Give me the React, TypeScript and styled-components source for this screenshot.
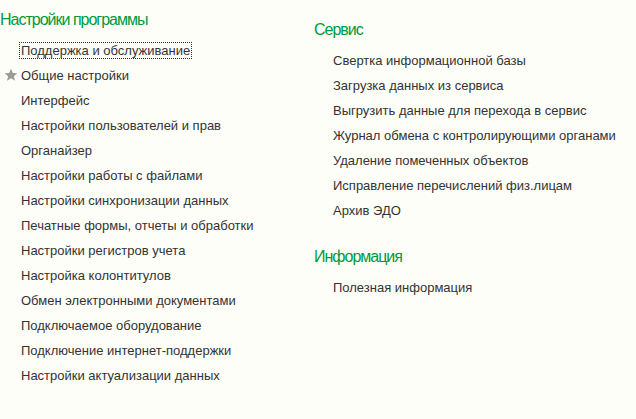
import * as React from 'react';
import styled, { createGlobalStyle } from 'styled-components';

const GlobalStyle = createGlobalStyle`
  html, body {
    margin: 0;
    padding: 0;
    background: #fefef8;
  }
  body {
    font-family: "Liberation Sans", Arial, sans-serif;
    color: #333333;
  }
`

const Page = styled.div`
  width: 636px;
  height: 419px;
  display: grid;
  grid-template-columns: 314px 1fr;
  box-sizing: border-box;
  overflow: hidden;
`

const Column = styled.div<{ $top: number }>`
  display: flex;
  flex-direction: column;
  padding-top: ${p => p.$top}px;
`

const Heading = styled.div`
  font-size: 16px;
  line-height: 20px;
  letter-spacing: -1px;
  color: #00993d;
  margin-bottom: 8px;
`

const Section = styled.div`
  display: flex;
  flex-direction: column;
  margin-bottom: 24px;
`

const Row = styled.div<{ $indent: number }>`
  display: flex;
  align-items: center;
  height: 25px;
  padding-left: ${p => p.$indent}px;
  position: relative;
`

const Star = styled.span`
  position: absolute;
  left: 4px;
  top: 5px;
  width: 14px;
  height: 14px;
`

const Link = styled.span<{ $focused?: boolean }>`
  font-size: 13px;
  line-height: 15px;
  padding: 0 1px;
  margin-left: -2px;
  border: 1px dotted ${p => (p.$focused ? '#333' : 'transparent')};
  white-space: nowrap;
  cursor: pointer;
`

const left = [
  'Поддержка и обслуживание',
  'Общие настройки',
  'Интерфейс',
  'Настройки пользователей и прав',
  'Органайзер',
  'Настройки работы с файлами',
  'Настройки синхронизации данных',
  'Печатные формы, отчеты и обработки',
  'Настройки регистров учета',
  'Настройка колонтитулов',
  'Обмен электронными документами',
  'Подключаемое оборудование',
  'Подключение интернет-поддержки',
  'Настройки актуализации данных',
]

const service = [
  'Свертка информационной базы',
  'Загрузка данных из сервиса',
  'Выгрузить данные для перехода в сервис',
  'Журнал обмена с контролирующими органами',
  'Удаление помеченных объектов',
  'Исправление перечислений физ.лицам',
  'Архив ЭДО',
]

function StarIcon() {
  return (
    <Star>
      <svg width="14" height="14" viewBox="0 0 14 14">
        <path d="M7 0.8 L8.8 5 L13.3 5.3 L9.9 8.2 L11 12.7 L7 10.3 L3 12.7 L4.1 8.2 L0.7 5.3 L5.2 5 Z" fill="#9a9a9a" />
      </svg>
    </Star>
  )
}

export default function App() {
  return (
    <Page>
      <GlobalStyle />
      <Column $top={10}>
        <Heading>Настройки программы</Heading>
        <Section>
          {left.map((t, i) => (
            <Row key={t} $indent={21}>
              {i === 1 && <StarIcon />}
              <Link $focused={i === 0}>{t}</Link>
            </Row>
          ))}
        </Section>
      </Column>
      <Column $top={20}>
        <Heading>Сервис</Heading>
        <Section>
          {service.map(t => (
            <Row key={t} $indent={19}>
              <Link>{t}</Link>
            </Row>
          ))}
        </Section>
        <Heading>Информация</Heading>
        <Section>
          <Row $indent={19}>
            <Link>Полезная информация</Link>
          </Row>
        </Section>
      </Column>
    </Page>
  )
}
